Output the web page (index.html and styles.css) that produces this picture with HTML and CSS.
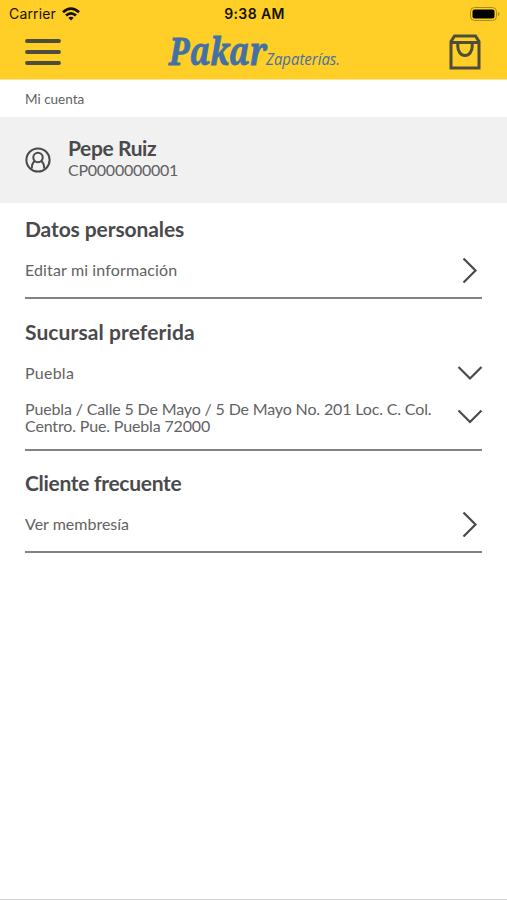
FILE: index.html
```html
<!DOCTYPE html>
<html lang="es">
<head>
  <meta charset="UTF-8">
  <meta name="viewport" content="width=device-width, initial-scale=1.0">
  <title>Mi cuenta</title>
  <link rel="stylesheet" href="styles.css">
</head>
<body>

  <header class="header">
    <!-- Barra de estado -->
    <div class="status-bar">
      <div class="carrier">
        <span>Carrier</span>
        <svg class="wifi" viewBox="0 0 18 14" fill="none" stroke="#161200" stroke-width="2.8">
          <path d="M1 5.2Q9-2 17 5.2"/>
          <path d="M4 8.5Q9 4.2 14 8.5"/>
          <path d="M6.3 10.7Q9 8.7 11.7 10.7L9 13.6Z" fill="#161200" stroke="none"/>
        </svg>
      </div>
      <div class="time">9:38 AM</div>
      <svg class="battery" viewBox="0 0 30 14">
        <rect x=".5" y=".5" width="26" height="13" rx="4" fill="none" stroke="#a98a1c"/>
        <rect x="2.5" y="2.5" width="22" height="9" rx="2" fill="#000"/>
        <path d="M28 5v4q1.5-.6 1.5-2T28 5z" fill="#a98a1c"/>
      </svg>
    </div>

    <!-- Menú, logo y bolsa -->
    <div class="navbar">
      <svg class="menu" viewBox="0 0 36 28" stroke="#4d4d3b" stroke-width="3.8" stroke-linecap="round">
        <path d="M2 3h32M2 14h32M2 25h32"/>
      </svg>
      <svg class="logo" viewBox="0 0 180 50">
        <text class="logo-name" x="5" y="38" textLength="98" lengthAdjust="spacingAndGlyphs">Pakar</text>
        <text class="logo-sub" x="102" y="38" textLength="74" lengthAdjust="spacingAndGlyphs">Zapaterías.</text>
      </svg>
      <svg class="bag" viewBox="0 0 32 36" fill="none" stroke="#4d4d3b" stroke-width="3">
        <path d="M2 7.5L5.500 2h21L30 7.500V34H2zM2 8.500h28"/>
        <path d="M8.800 8.500v4c0 5 3 9 7.200 9s7.200-4 7.200-9v-4"/>
      </svg>
    </div>
  </header>

  <div class="breadcrumb">Mi cuenta</div>

  <!-- Datos del usuario -->
  <div class="user">
    <svg class="avatar" viewBox="0 0 26 26" fill="none" stroke="#4a4a4a" stroke-width="2">
      <circle cx="13" cy="13" r="11.600"/>
      <circle cx="13" cy="10.500" r="4.700"/>
      <path d="M6.800 21.500c0-4 1-6.500 3.400-7.500M19.200 21.500c0-4-1-6.500-3.400-7.500"/>
    </svg>
    <div class="user-info">
      <div class="user-name">Pepe Ruiz</div>
      <div class="user-code">CP0000000001</div>
    </div>
  </div>

  <main class="content">
    <section class="section personal">
      <h2>Datos personales</h2>
      <div class="row">
        <span class="edit">Editar mi información</span>
        <svg class="arrow" viewBox="0 0 26 26"><path d="M6.500 1.500L18.500 13.500L6.500 25.500"/></svg>
      </div>
    </section>

    <section class="section branch">
      <h2>Sucursal preferida</h2>
      <div class="row">
        <span class="city">Puebla</span>
        <svg class="arrow" viewBox="0 0 26 26"><path d="M1.500 7L13 18.500L24.500 7"/></svg>
      </div>
      <div class="row address">
        <span>Puebla / Calle 5 De Mayo / 5 De Mayo No. 201 Loc. C. Col.<br>Centro. Pue. Puebla 72000</span>
        <svg class="arrow" viewBox="0 0 26 26"><path d="M1.500 6.500L13 18L24.500 6.500"/></svg>
      </div>
    </section>

    <section class="section member">
      <h2>Cliente frecuente</h2>
      <div class="row">
        <span>Ver membresía</span>
        <svg class="arrow" viewBox="0 0 26 26"><path d="M6.500 1.500L18.500 13.500L6.500 25.500"/></svg>
      </div>
    </section>
  </main>

  <div class="bottom-line"></div>

</body>
</html>
```
FILE: styles.css
```css
* {
  box-sizing: border-box;
}
body {
  margin: 0;
  height: 900px;
  display: flex;
  flex-direction: column;
  font-family: Lato, "Liberation Sans", sans-serif;
  color: #4a4a4c;
  background: #fff;
}
svg {
  display: block;
  flex-shrink: 0;
}

/* Cabecera amarilla */
.header {
  height: 80px;
  background: #ffce27;
  border-bottom: 1px solid #fbe59a;
}
.status-bar {
  height: 27px;
  padding: 0 7px 0 9px;
  display: grid;
  grid-template-columns: 1fr auto 1fr;
  align-items: center;
  font-family: Inter, "Liberation Sans", sans-serif;
  font-size: 14px;
  color: #161200;
}
.carrier {
  display: flex;
  align-items: center;
  gap: 6px;
  letter-spacing: 0.15px;
}
.wifi {
  width: 18px;
  height: 14px;
}
.time {
  font-weight: 600;
  letter-spacing: 0.4px;
}
.battery {
  width: 30px;
  height: 14px;
  justify-self: end;
}
.navbar {
  height: 50px;
  padding: 0 26px 0 25px;
  display: flex;
  align-items: center;
}
.menu {
  width: 36px;
  height: 28px;
}
.logo {
  width: 180px;
  height: 50px;
  margin-left: 103px;
  overflow: visible;
  fill: #4471a5;
}
.logo-name {
  font: italic bold 38px "Noto Serif", "DejaVu Serif", "Liberation Serif", serif;
  stroke: #4471a5;
  stroke-width: 0.8px;
}
.logo-sub {
  font: italic 500 17px "Open Sans", "Noto Sans", sans-serif;
}
.bag {
  width: 32px;
  height: 36px;
  margin-left: auto;
}

.breadcrumb {
  height: 37px;
  padding-left: 25px;
  font-size: 13.5px;
  line-height: 38px;
  color: #626264;
}

/* Usuario */
.user {
  height: 86px;
  padding-left: 25px;
  display: flex;
  align-items: center;
  gap: 17px;
  background: #f1f1f1;
}
.avatar {
  width: 26px;
  height: 26px;
}
.user-info {
  padding-bottom: 5px;
}
.user-name {
  font-size: 21px;
  font-weight: bold;
  line-height: 24px;
  letter-spacing: -0.4px;
}
.user-code {
  font-size: 16px;
  line-height: 20px;
  letter-spacing: -0.25px;
  color: #606062;
}

/* Secciones */
.content {
  flex: 1;
  padding: 0 25px;
}
.section {
  padding: 18px 0 14px;
  border-bottom: 2px solid #828282;
}
.section h2 {
  margin: 0 0 14px;
  font-size: 21px;
  line-height: 28px;
}
.row {
  height: 26px;
  display: flex;
  justify-content: space-between;
  align-items: center;
  font-size: 16px;
  line-height: 17px;
  color: #626264;
}
.row > span {
  padding-bottom: 1px;
}
.personal {
  padding-top: 12px;
}
.personal h2 {
  letter-spacing: -0.1px;
}
.edit {
  letter-spacing: 0.13px;
}
.branch {
  padding-top: 19px;
}
.branch h2 {
  letter-spacing: 0.1px;
}
.city {
  letter-spacing: 0.25px;
}
.address {
  height: 34px;
  margin: 14px 0 1px;
  letter-spacing: -0.15px;
  white-space: nowrap;
}
.member h2 {
  letter-spacing: -0.3px;
}
.arrow {
  width: 26px;
  height: 26px;
  margin-right: -1px;
  fill: none;
  stroke: #4a4a4c;
  stroke-width: 2.2;
}
.bottom-line {
  height: 1px;
  background: #d2d2d2;
}
```
